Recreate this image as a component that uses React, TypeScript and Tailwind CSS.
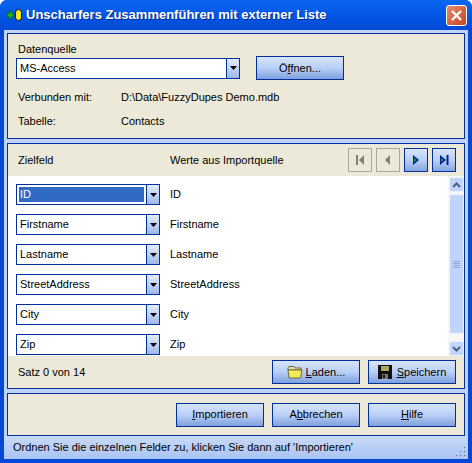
import type { ReactNode } from 'react';

const fields = ['ID', 'Firstname', 'Lastname', 'StreetAddress', 'City', 'Zip'];

function Arrow() {
  return (
    <svg width="7" height="4" viewBox="0 0 7 4">
      <path d="M0 0h7L3.500 4z" fill="#000" />
    </svg>
  );
}

function XpButton({ children, className }: { children: ReactNode; className: string }) {
  return (
    <button className={`flex items-center justify-center border border-[#00309c] bg-gradient-to-b from-[#d8e4fb] via-[#b9cff6] to-[#7f9fdc] text-[#000] ${className}`}>
      {children}
    </button>
  );
}

function NavButton({ enabled, children }: { enabled: boolean; children: ReactNode }) {
  return (
    <div
      className={`flex h-6 w-6 items-center justify-center border ${
        enabled
          ? 'border-[#00309c] bg-gradient-to-b from-[#d8e4fb] via-[#b9cff6] to-[#86a5e0]'
          : 'border-[#aca899] bg-[#ece9d8]'
      }`}
    >
      <svg width="12" height="12" viewBox="0 0 12 12">{children}</svg>
    </div>
  );
}

function Combo({ value, selected, width }: { value: string; selected?: boolean; width: string }) {
  return (
    <div className={`flex h-[21px] border border-[#00309c] bg-white ${width}`}>
      <div className="flex min-w-0 flex-1 items-center p-[2px]">
        <span className={`flex h-full flex-1 items-center pl-[1px] ${selected ? 'bg-[#316ac5] text-white' : ''}`}>{value}</span>
      </div>
      <div className="flex w-[13px] items-center justify-center border-l border-[#00309c] bg-gradient-to-b from-[#e4ecfc] to-[#9db8ea]">
        <Arrow />
      </div>
    </div>
  );
}

function ScrollGlyph({ up }: { up?: boolean }) {
  return (
    <div className="flex h-[15px] w-[15px] items-center justify-center rounded-[2px] border border-[#eef3fd] bg-[#c3d4fb]">
      <svg width="9" height="6" viewBox="0 0 9 6">
        <path d={up ? 'M1 5l3.500-3.500L8 5' : 'M1 1l3.500 3.500L8 1'} fill="none" stroke="#4d6185" strokeWidth="2" />
      </svg>
    </div>
  );
}

export default function App() {
  return (
    <div className="relative flex h-[463px] w-[472px] flex-col overflow-hidden rounded-t-[7px] bg-[#0747d6] font-['Liberation_Sans',sans-serif] text-[11px] text-[#000]">
      {/* title bar */}
      <div className="flex h-[30px] shrink-0 items-center bg-gradient-to-b from-[#0b66ee] via-[#0457e6] to-[#0349d4] pl-[6px] pr-[5px]">
        <svg width="16" height="12" viewBox="0 0 16 12" className="shrink-0">
          <path d="M1 4h2.500V1L8 6l-4.500 5V8H1z" fill="#22b020" stroke="#063" />
          <rect x="9.500" y="0.500" width="6" height="11" rx="3" fill="#ffe81a" stroke="#111" />
        </svg>
        <span className="ml-[4px] flex-1 text-[13px] font-bold text-white [text-shadow:1px_1px_#0a2a8c]">
          Unscharfers Zusammenführen mit externer Liste
        </span>
        <div className="flex h-[21px] w-[21px] items-center justify-center rounded-[3px] border border-white bg-gradient-to-br from-[#e88a6a] to-[#c8401e]">
          <svg width="13" height="13" viewBox="0 0 13 13">
            <path d="M2 2l9 9M11 2l-9 9" stroke="#fff" strokeWidth="2.400" />
          </svg>
        </div>
      </div>

      {/* body */}
      <div className="mx-[4px] flex flex-1 flex-col bg-[#c1d3fb] pt-[3px]">
        <div className="mx-[3px] flex h-[106px] flex-col border border-[#00309c] bg-[#ece9d8] pl-[8px] pt-[8px]">
          <span className="ml-[2px] leading-[14px]">Datenquelle</span>
          <div className="flex items-center gap-4">
            <Combo value="MS-Access" width="w-[224px]" />
            <XpButton className="h-6 w-[88px]">
              <span>
                Ö<span className="underline">f</span>fnen...
              </span>
            </XpButton>
          </div>
          <div className="ml-[2px] mt-[10px] flex leading-[14px]">
            <span className="w-[103px]">Verbunden mit:</span>
            <span>D:\Data\FuzzyDupes Demo.mdb</span>
          </div>
          <div className="ml-[2px] mt-[10px] flex leading-[14px]">
            <span className="w-[103px]">Tabelle:</span>
            <span>Contacts</span>
          </div>
        </div>

        <div className="mx-[3px] mt-[4px] flex h-[246px] flex-col border border-[#00309c] bg-[#ece9d8]">
          <div className="flex h-[32px] shrink-0 items-center pl-[10px] pr-[8px]">
            <span className="w-[152px]">Zielfeld</span>
            <span className="flex-1">Werte aus Importquelle</span>
            <div className="flex gap-1">
              <NavButton enabled={false}>
                <path d="M2 1h2v10H2zM10 1v10L5 6z" fill="#7f7f7f" />
              </NavButton>
              <NavButton enabled={false}>
                <path d="M8 1v10L3 6z" fill="#7f7f7f" />
              </NavButton>
              <NavButton enabled>
                <path d="M3 1v10l6-5z" fill="#00209c" />
                <path d="M4 4v4l3-2z" fill="#18a018" />
              </NavButton>
              <NavButton enabled>
                <path d="M2 1v10l6-5z" fill="#00209c" />
                <path d="M3 4v4l3-2z" fill="#18a018" />
                <path d="M8.500 1h2v10h-2z" fill="#00209c" />
              </NavButton>
            </div>
          </div>

          <div className="flex h-[180px] shrink-0 bg-white">
            <div className="flex flex-1 flex-col gap-[9px] pl-[8px] pt-[8px]">
              {fields.map((field, i) => (
                <div key={field} className="flex items-center">
                  <Combo value={field} selected={i === 0} width="w-[144px]" />
                  <span className="ml-[10px]">{field}</span>
                </div>
              ))}
            </div>
            <div className="flex w-[16px] flex-col items-center bg-[#f6f6f2] pt-[1px]">
              <ScrollGlyph up />
              <div className="mt-[2px] flex h-[140px] w-[15px] flex-col items-center justify-center gap-[1px] rounded-[2px] border border-[#eef3fd] bg-[#c3d4fb]">
                <div className="h-[1px] w-[7px] bg-[#8ba6e0]" />
                <div className="h-[1px] w-[7px] bg-[#8ba6e0]" />
                <div className="h-[1px] w-[7px] bg-[#8ba6e0]" />
                <div className="h-[1px] w-[7px] bg-[#8ba6e0]" />
              </div>
              <div className="mt-[7px]">
                <ScrollGlyph />
              </div>
            </div>
          </div>

          <div className="flex flex-1 items-center justify-between pl-[10px] pr-[8px]">
            <span>Satz 0 von 14</span>
            <div className="flex gap-2">
              <XpButton className="h-6 w-[88px] gap-[2px]">
                <svg width="17" height="14" viewBox="0 0 17 14">
                  <path d="M1 3l1-1.500h5L8 3h6v2H1z" fill="#e8e2b0" stroke="#6b6b3a" />
                  <path d="M1 5h14l-1.500 8H2z" fill="#f6ea5a" stroke="#6b6b3a" />
                </svg>
                <span>
                  <span className="underline">L</span>aden...
                </span>
              </XpButton>
              <XpButton className="h-6 w-[88px] gap-[5px]">
                <svg width="14" height="14" viewBox="0 0 14 14">
                  <path d="M0 0h14v14H0z" fill="#111" />
                  <path d="M3 1h8v5H3z" fill="#a8a860" />
                  <path d="M4 9h6v5H4z" fill="#777" />
                  <path d="M5 10h2v3H5z" fill="#111" />
                </svg>
                <span>
                  <span className="underline">S</span>peichern
                </span>
              </XpButton>
            </div>
          </div>
        </div>

        <div className="mx-[3px] mt-[4px] flex h-[43px] items-center justify-end gap-2 border border-[#00309c] bg-[#ece9d8] pr-[8px]">
          <XpButton className="h-6 w-[88px]">
            <span>
              <span className="underline">I</span>mportieren
            </span>
          </XpButton>
          <XpButton className="h-6 w-[88px]">
            <span>
              A<span className="underline">b</span>brechen
            </span>
          </XpButton>
          <XpButton className="h-6 w-[88px]">
            <span>
              <span className="underline">H</span>ilfe
            </span>
          </XpButton>
        </div>

        <div className="flex flex-1 items-center bg-gradient-to-b from-[#c9daf8] to-[#a9c4f3] pl-[9px]">
          Ordnen Sie die einzelnen Felder zu, klicken Sie dann auf 'Importieren'
        </div>
      </div>
      <div className="h-[4px] shrink-0" />

      <svg width="12" height="12" viewBox="0 0 12 12" className="absolute bottom-[5px] right-[5px]">
        <path d="M9 1h2v2H9zM5 5h2v2H5zM9 5h2v2H9zM1 9h2v2H1zM5 9h2v2H5zM9 9h2v2H9z" fill="#fff" />
        <path d="M9 1h1.500v1.500H9zM5 5h1.500v1.500H5zM9 5h1.500v1.500H9zM1 9h1.500v1.500H1zM5 9h1.500v1.500H5zM9 9h1.500v1.500H9z" fill="#5a6f9c" />
      </svg>
    </div>
  );
}
